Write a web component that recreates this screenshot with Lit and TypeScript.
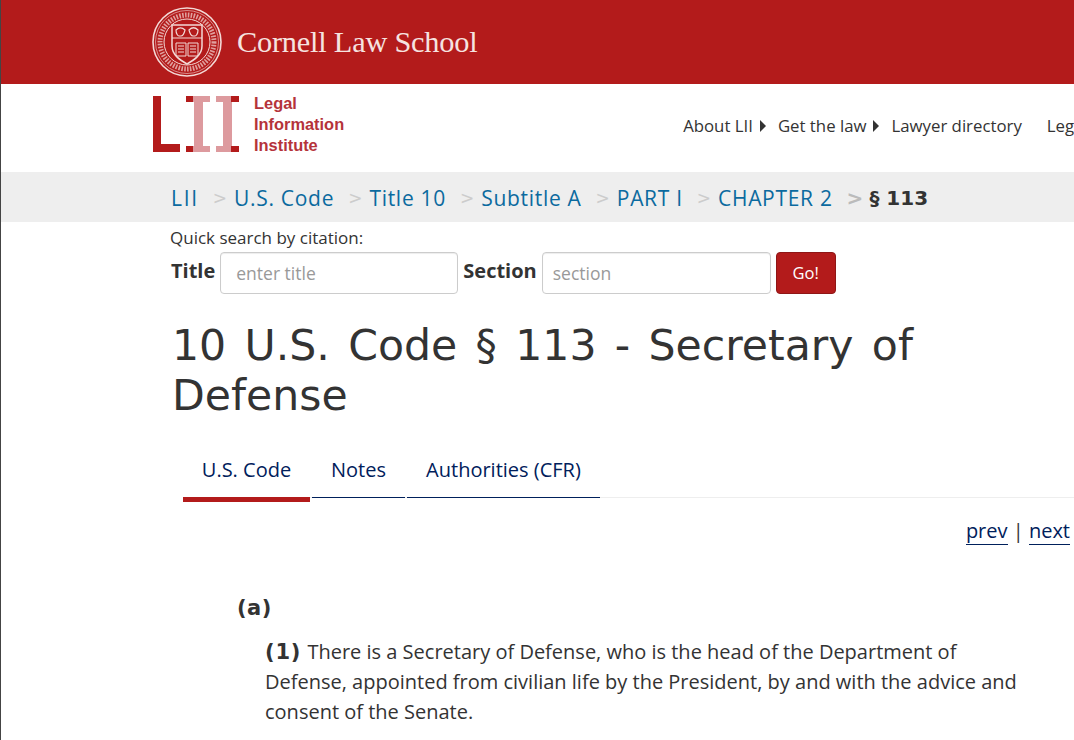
import { LitElement, html, css } from "lit";
import { customElement } from "lit/decorators.js";

const seal = html`<svg class="seal" viewBox="0 0 70 70" width="70" height="70" aria-hidden="true">
  <g fill="none" stroke="#f3d9d6">
    <circle cx="35" cy="35" r="34" stroke-width="1.6"/>
    <circle cx="35" cy="35" r="31.5" stroke-width=".6"/>
    <circle cx="35" cy="35" r="23" stroke-width="1"/>
    <circle cx="35" cy="35" r="27" stroke-width="5" stroke-dasharray="1.6 1.3" opacity=".7"/>
    <path d="M20 18h30v21c0 9-8 14-15 18-7-4-15-9-15-18z" stroke-width="1.5"/>
    <path d="M20 31h30" stroke-width="1"/>
    <path d="M24 23c3-3 6-3 9 0-1 4-2 6-4 6h-2c-1 0-3-2-3-6zM37 23c3-3 6-3 9 0 0 4-2 6-3 6h-2c-2 0-3-2-4-6z" stroke-width="1.2"/>
    <path d="M24 36h10v13H24zM36 36h10v13H36zM26 39h6M26 42h6M26 45h6M38 39h6M38 42h6M38 45h6" stroke-width="1"/>
  </g>
</svg>`;

const lii = html`<svg class="lii" viewBox="0 0 87 56" width="87" height="56" aria-hidden="true">
  <path fill="#b31b1b" d="M0 0h8v48h19v8H0z"/>
  <rect x="41" y="0" width="9" height="56" fill="#dd9a9e"/>
  <rect x="70" y="0" width="9" height="56" fill="#dd9a9e"/>
  <path fill="#dd9a9e" d="M33 0h24v6H33zM33 50h24v6H33zM63 0h23v6H63zM63 50h23v6H63z"/>
  <path fill="#b31b1b" d="M33 0h7v6h-7zM33 50h7v6h-7zM78 0h8v6h-8zM78 50h8v6h-8z"/>
</svg>`;

const crumbs = ["LII", "U.S. Code", "Title 10", "Subtitle A", "PART I", "CHAPTER 2"];

@customElement("app-root")
export class AppRoot extends LitElement {
  static styles = css`
    :host {
      display: block;
      width: 1074px;
      height: 740px;
      overflow: hidden;
      box-sizing: border-box;
      border-left: 1px solid #444;
      background: #fff;
      color: #333;
      font-family: "Open Sans", sans-serif;
    }
    .cornell {
      height: 84px;
      background: #b31b1b;
      display: flex;
      align-items: center;
      padding-left: 151px;
      gap: 15px;
    }
    .seal { flex: none; }
    .cornell-name {
      font-family: "Liberation Serif", serif;
      font-size: 30.3px;
      letter-spacing: -0.2px;
      color: #f6e3e0;
      white-space: nowrap;
    }
    .masthead {
      height: 88px;
      display: flex;
      padding-left: 151px;
      white-space: nowrap;
    }
    .brand { display: flex; gap: 14px; padding-top: 12px; height: 56px; }
    .lii { margin-left: 1px; }
    .brand-name {
      font-family: "Liberation Sans", sans-serif;
      font-weight: 700;
      font-size: 16.4px;
      line-height: 21px;
      margin-top: -3px;
      color: #b5333a;
    }
    .nav {
      margin-left: 339px;
      padding-top: 31px;
      display: flex;
      font-size: 16.8px;
      line-height: 22px;
      color: #333;
      height: 22px;
    }
    .nav span { display: flex; align-items: center; }
    .nav .last { margin-left: 25px; }
    .tri {
      width: 0;
      height: 0;
      margin: 0 12px 0 7px;
      border-left: 6px solid #333;
      border-top: 6px solid transparent;
      border-bottom: 6px solid transparent;
    }
    .crumbs {
      box-sizing: border-box;
      height: 50px;
      padding-top: 1px;
      background: #eeeeee;
      display: flex;
      align-items: center;
      padding-left: 170px;
      font-size: 21px;
      white-space: nowrap;
    }
    .crumbs a { color: #0b6a9f; letter-spacing: 0.7px; }
    .crumbs a.first { letter-spacing: 1.7px; }
    .sep { color: #ccc; margin: 0 7px 0 14px; font-family: "DejaVu Sans", sans-serif; font-size: 17px; }
    .sep.end { color: #bbb; font-size: 20px; font-weight: 700; margin-right: 6px; }
    .here { font-family: "DejaVu Sans", sans-serif; font-weight: 700; color: #333; font-size: 20px; }
    .main { padding-left: 169px; }
    .qs-label { font-size: 17px; line-height: 20px; padding-top: 6px; }
    .qs {
      display: flex;
      align-items: flex-start;
      margin-top: 4px;
      height: 42px;
    }
    .qs b { font-size: 20px; line-height: 38px; margin: 0 5px 0 1px; }
    .qs b.second { margin-left: 0; }
    .qs .field {
      box-sizing: border-box;
      height: 42px;
      border: 1px solid #ccc;
      border-radius: 4px;
      box-shadow: inset 0 1px 1px rgba(0,0,0,.075);
      color: #999;
      font-size: 17.5px;
      line-height: 40px;
      margin-right: 5px;
    }
    .f1 { width: 238px; padding-left: 15px; }
    .f2 { width: 229px; padding-left: 10px; }
    .go {
      box-sizing: border-box;
      width: 60px;
      height: 42px;
      background: #b31b1b;
      border: 1px solid #8f1616;
      border-radius: 4px;
      color: #fff;
      font-size: 16.5px;
      line-height: 40px;
      text-align: center;
    }
    h1 {
      margin: 26px 0 0 2px;
      font-family: "DejaVu Sans", sans-serif;
      font-weight: 400;
      font-size: 42.6px;
      word-spacing: 4.8px;
      line-height: 50px;
      width: 800px;
      color: #333;
    }
    .tabs {
      display: flex;
      margin: 29px 0 0 13px;
      height: 48px;
      border-bottom: 1px solid #eee;
      width: 891px;
      font-size: 20px;
      color: #00205b;
    }
    .tab {
      box-sizing: border-box;
      height: 49px;
      line-height: 42px;
      text-align: center;
      border-bottom: 1px solid #00205b;
      margin-right: 2px;
    }
    .tab.on { height: 53px; border-bottom: 5px solid #b31b1b; }
    .t1 { width: 127px; }
    .t2 { width: 93px; }
    .t3 { width: 193px; }
    .pager {
      text-align: right;
      font-size: 20px;
      line-height: 26px;
      margin-top: 20px;
      padding-right: 4px;
      color: #333;
    }
    .pager a { color: #00205b; border-bottom: 1px solid #00205b; }
    .a { font-family: "DejaVu Sans", sans-serif; font-weight: 700; font-size: 21px; letter-spacing: .5px; margin: 49px 0 0 67px; line-height: 30px; }
    .p { font-size: 20px; line-height: 30px; margin: 14px 0 0 95px; width: 770px; }
    .p b { font-family: "DejaVu Sans", sans-serif; font-weight: 700; font-size: 21px; letter-spacing: .8px; margin-right: 1px; }
  `;

  render() {
    return html`
      <div class="cornell">${seal}<span class="cornell-name">Cornell Law School</span></div>
      <div class="masthead">
        <div class="brand">${lii}<div class="brand-name">Legal<br />Information<br />Institute</div></div>
        <div class="nav">
          <span>About LII<i class="tri"></i></span>
          <span>Get the law<i class="tri"></i></span>
          <span>Lawyer directory</span>
          <span class="last">Legal encyclopedia</span>
        </div>
      </div>
      <div class="crumbs">
        ${crumbs.map((c, i) => html`<a class=${i === 0 ? "first" : ""}>${c}</a><span class="sep ${i === crumbs.length - 1 ? "end" : ""}">&gt;</span>`)}
        <span class="here">§ 113</span>
      </div>
      <div class="main">
        <div class="qs-label">Quick search by citation:</div>
        <div class="qs">
          <b>Title</b><div class="field f1">enter title</div>
          <b class="second">Section</b><div class="field f2">section</div>
          <div class="go">Go!</div>
        </div>
        <h1>10 U.S. Code § 113 - Secretary of Defense</h1>
        <div class="tabs">
          <div class="tab on t1">U.S. Code</div>
          <div class="tab t2">Notes</div>
          <div class="tab t3">Authorities (CFR)</div>
        </div>
        <div class="pager"><a>prev</a> | <a>next</a></div>
        <div class="a">(a)</div>
        <div class="p"><b>(1)</b> There is a Secretary of Defense, who is the head of the Department of Defense, appointed from civilian life by the President, by and with the advice and consent of the Senate.</div>
      </div>
    `;
  }
}
